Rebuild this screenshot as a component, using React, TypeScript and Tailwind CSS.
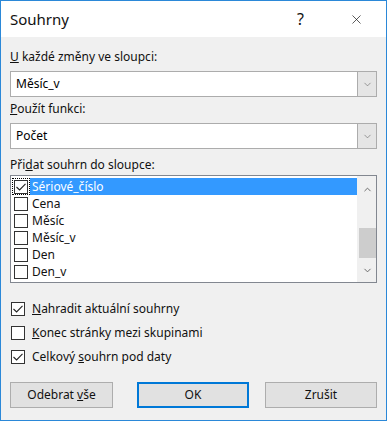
import { ChevronDown, ChevronUp, X } from "lucide-react";

const font = { fontFamily: '"Noto Sans", "Open Sans", sans-serif' };

const Check = ({ checked }: { checked: boolean }) => (
  <div className="flex h-[14px] w-[14px] shrink-0 items-center justify-center border border-[#333333] bg-white">
    {checked && (
      <svg width="12" height="12" viewBox="0 0 12 12">
        <path d="M1.5 6 L4.6 9 L10.5 2.8" fill="none" stroke="#222" strokeWidth="1.1" />
      </svg>
    )}
  </div>
);

const Combo = ({ value }: { value: string }) => (
  <div className="flex h-[26px] w-full border border-[#acacac] bg-white">
    <div className="flex flex-1 items-center pl-[5px] text-[12px] text-black">{value}</div>
    <div className="flex w-[19px] items-center justify-center border-l border-[#acacac] bg-[#e5e5e5]">
      <ChevronDown size={11} strokeWidth={1.3} color="#606060" />
    </div>
  </div>
);

const items = ["Sériové_číslo", "Cena", "Měsíc", "Měsíc_v", "Den", "Den_v"];

export default function App() {
  return (
    <div
      className="box-border flex h-[421px] w-[387px] flex-col border border-[#2b88d8] bg-[#f0f0f0] text-[#111]"
      style={font}
    >
      {/* title bar */}
      <div className="flex h-[36px] items-center bg-white pl-[9px] pr-[22px]">
        <span className="text-[15px]">Souhrny</span>
        <span className="ml-auto mr-[45px] text-[16px]">?</span>
        <X size={15} strokeWidth={1.1} />
      </div>

      <div className="flex flex-col px-[9px] text-[12px]">
        <div className="mt-[12px] h-[16px] leading-[16px]">
          <u>U</u> každé změny ve sloupci:
        </div>
        <div className="mt-[6px]">
          <Combo value="Měsíc_v" />
        </div>

        <div className="mt-[4px] h-[16px] leading-[16px]">
          <u>P</u>oužít funkci:
        </div>
        <div className="mt-[6px]">
          <Combo value="Počet" />
        </div>

        <div className="mt-[8px] h-[16px] leading-[16px]">
          Při<u>d</u>at souhrn do sloupce:
        </div>
        <div className="mt-[2px] flex h-[108px] border border-[#828790] bg-white">
          <div className="flex flex-1 flex-col pl-[1px] pt-[2px]">
            {items.map((it, i) => (
              <div key={it} className="flex h-[17px] items-center">
                <div
                  className={`flex h-[17px] w-[18px] items-center justify-center ${
                    i === 0 ? "outline-1 outline-dotted outline-offset-[-1px] outline-black" : ""
                  }`}
                >
                  <Check checked={i === 0} />
                </div>
                <div
                  className={`flex h-[17px] flex-1 items-center pl-[2px] ${
                    i === 0 ? "bg-[#3399ff] text-white" : ""
                  }`}
                >
                  {it}
                </div>
              </div>
            ))}
          </div>
          <div className="flex w-[19px] flex-col bg-[#f0f0f0] pl-[2px]">
            <div className="flex h-[17px] items-center justify-center pt-[10px]">
              <ChevronUp size={11} strokeWidth={2} color="#606060" />
            </div>
            <div className="mt-[35px] h-[30px] w-full bg-[#cdcdcd]" />
            <div className="mt-auto flex h-[20px] items-center justify-center pb-[3px]">
              <ChevronDown size={11} strokeWidth={2} color="#606060" />
            </div>
          </div>
        </div>

        <div className="mt-[13px] flex h-[25px] items-center gap-[7px] pl-[1px]">
          <Check checked />
          <span>
            <u>N</u>ahradit aktuální souhrny
          </span>
        </div>
        <div className="flex h-[24px] items-center gap-[7px] pl-[1px]">
          <Check checked={false} />
          <span>
            <u>K</u>onec stránky mezi skupinami
          </span>
        </div>
        <div className="flex h-[24px] items-center gap-[7px] pl-[1px]">
          <Check checked />
          <span>
            Celkový <u>s</u>ouhrn pod daty
          </span>
        </div>

        <div className="mt-[13px] flex h-[26px] items-stretch">
          <button className="flex w-[103px] items-center justify-center border border-[#adadad] bg-[#e1e1e1] text-[12px]">
            <span>
              Odebrat <u>v</u>še
            </span>
          </button>
          <button className="ml-[24px] flex w-[112px] items-center justify-center border-2 border-[#0078d7] bg-[#e1e1e1] text-[12px]">
            OK
          </button>
          <button className="ml-[16px] flex w-[112px] items-center justify-center border border-[#adadad] bg-[#e1e1e1] text-[12px]">
            Zrušit
          </button>
        </div>
      </div>
    </div>
  );
}
